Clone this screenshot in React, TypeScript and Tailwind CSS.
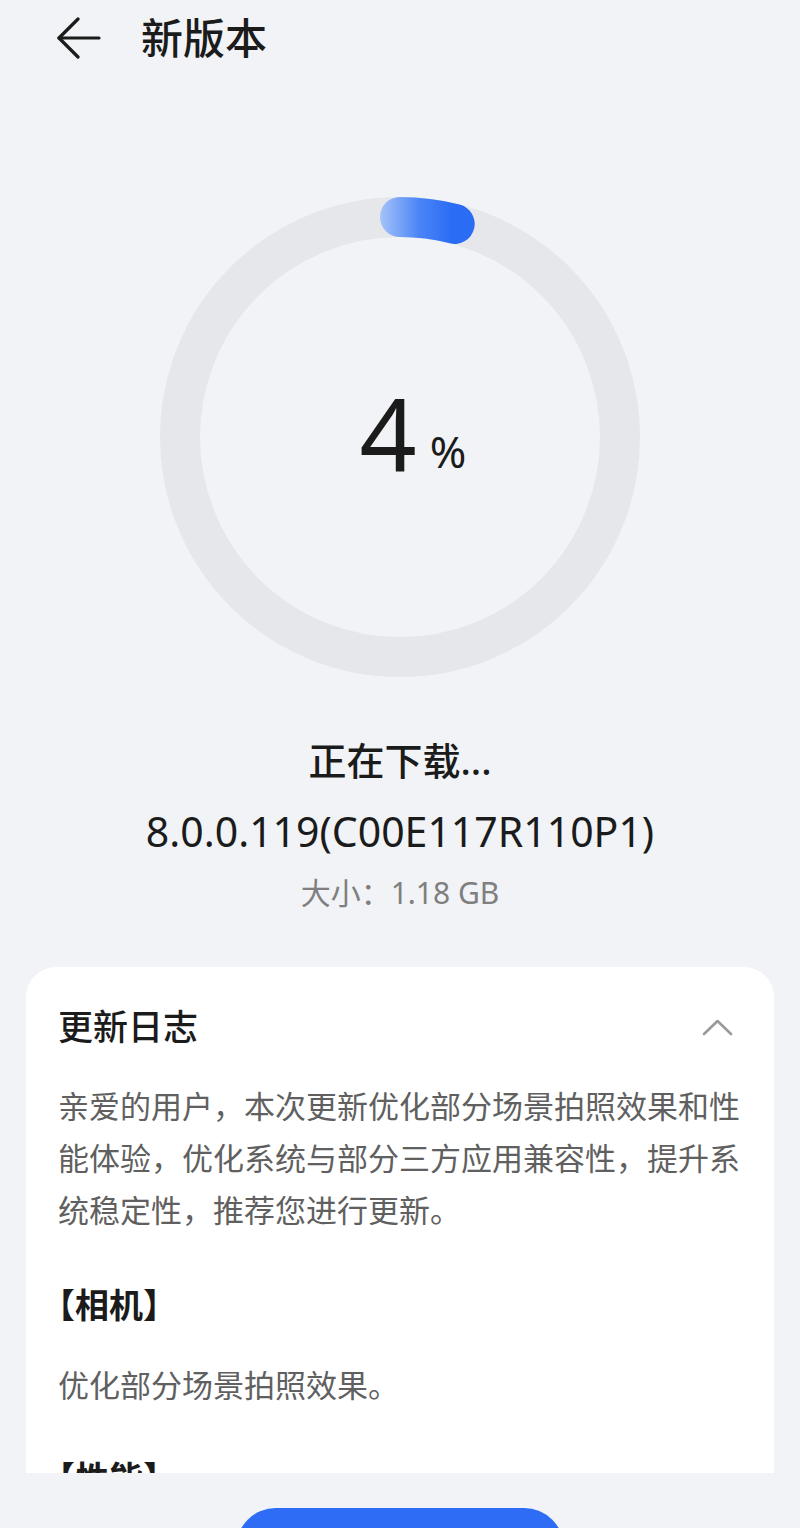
const sans = "font-['Noto_Sans','Noto_Sans_CJK_SC',sans-serif]";

function ProgressRing({ percent }: { percent: number }) {
  const r = 220;
  const angle = (percent / 100) * Math.PI * 2;
  const endX = 240 + r * Math.sin(angle);
  const endY = 240 - r * Math.cos(angle);

  return (
    <div className="relative w-[480px] h-[480px]">
      <svg width="480" height="480" viewBox="0 0 480 480">
        <defs>
          <linearGradient id="arc" x1="220" y1="0" x2="292" y2="0" gradientUnits="userSpaceOnUse">
            <stop offset="0" stopColor="#a6c3f9" />
            <stop offset="0.55" stopColor="#4a84f6" />
            <stop offset="1" stopColor="#2b6cf5" />
          </linearGradient>
        </defs>
        <circle cx="240" cy="240" r={r} fill="none" stroke="#e6e7ea" strokeWidth="40" />
        <path
          d={`M240 20 A${r} ${r} 0 0 1 ${endX.toFixed(1)} ${endY.toFixed(1)}`}
          fill="none"
          stroke="url(#arc)"
          strokeWidth="40"
          strokeLinecap="round"
        />
      </svg>
      {/* value in the middle of the ring */}
      <div className="absolute inset-0 flex items-center justify-center pl-[26px] pb-[10px]">
        <span className="text-[100px] leading-none text-[#1b1b1b]">{percent}</span>
        <span className="ml-[13px] mt-[38px] text-[44px] leading-none text-[#1b1b1b]">%</span>
      </div>
    </div>
  );
}

export default function App() {
  return (
    <div className={`w-[800px] h-[1528px] overflow-hidden bg-[#f1f3f6] flex flex-col ${sans}`}>
      {/* Header */}
      <div className="h-[76px] flex items-center pl-[57px] shrink-0">
        <svg width="44" height="42" viewBox="0 0 44 42" fill="none" stroke="#1b1b1b" strokeWidth="3.2" strokeLinecap="round" strokeLinejoin="round">
          <path d="M42 21H2" />
          <path d="M21 2L2 21l19 19" />
        </svg>
        <h1 className="ml-[40px] text-[42px] leading-none font-medium text-[#1b1b1b]">新版本</h1>
      </div>

      {/* Progress */}
      <div className="mt-[121px] flex justify-center shrink-0">
        <ProgressRing percent={4} />
      </div>

      <div className="flex flex-col items-center shrink-0">
        <p className="mt-[59px] h-[48px] leading-[48px] text-[38px] font-medium text-[#1b1b1b]">正在下载...</p>
        <p className="mt-[23px] h-[48px] leading-[48px] text-[41px] text-[#1b1b1b]">8.0.0.119(C00E117R110P1)</p>
        <p className="mt-[18px] h-[40px] leading-[40px] text-[30px] text-[#7f7f7f]">大小：1.18 GB</p>
      </div>

      {/* Changelog card */}
      <div className="mt-[54px] mx-[26px] h-[506px] shrink-0 overflow-hidden rounded-t-[30px] bg-white pl-[32px] pr-[32px] pt-[36px]">
        <div className="h-[48px] flex items-center justify-between">
          <span className="text-[35px] font-medium text-[#1b1b1b]">更新日志</span>
          <svg width="31" height="17" viewBox="0 0 31 17" fill="none" stroke="#9a9a9a" strokeWidth="2.6" strokeLinecap="round" strokeLinejoin="round" className="mr-[9px]">
            <path d="M2 15L15.5 2L29 15" />
          </svg>
        </div>
        <p className="mt-[29px] text-[31px] leading-[52px] text-[#606060]">
          亲爱的用户，本次更新优化部分场景拍照效果和性能体验，优化系统与部分三方应用兼容性，提升系统稳定性，推荐您进行更新。
        </p>
        <p className="mt-[45px] h-[48px] leading-[48px] text-[34px] font-bold text-[#1b1b1b] ml-[-17px]">【相机】</p>
        <p className="mt-[30px] text-[31px] leading-[52px] text-[#606060]">优化部分场景拍照效果。</p>
        <p className="mt-[43px] h-[48px] leading-[48px] text-[34px] font-bold text-[#1b1b1b] ml-[-17px]">【性能】</p>
      </div>

      {/* Bottom button, cut off by the screen edge */}
      <div className="mt-[35px] flex justify-center shrink-0">
        <button className="w-[328px] h-[80px] rounded-[40px] bg-[#2e6cf6]" />
      </div>
    </div>
  );
}
